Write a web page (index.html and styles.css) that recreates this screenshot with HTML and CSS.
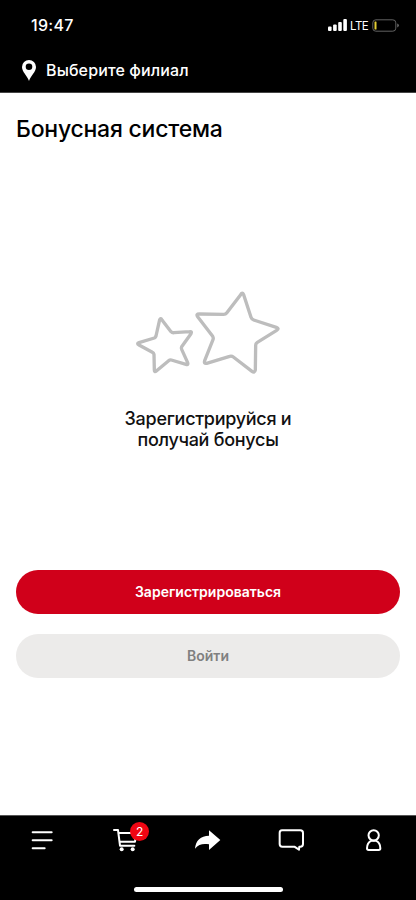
FILE: index.html
```html
<!DOCTYPE html>
<html lang="ru">
<head>
<meta charset="utf-8">
<meta name="viewport" content="width=device-width, initial-scale=1">
<title>Бонусная система</title>
<link rel="stylesheet" href="styles.css">
</head>
<body>
<div class="app">
  <header class="header">
    <div class="status">
      <span class="time">19:47</span>
      <div class="indicators">
        <svg class="signal" viewBox="0 0 19 12"><rect x="0" y="7.6" width="3.6" height="4.4" rx="1"/><rect x="5.1" y="5.4" width="3.6" height="6.6" rx="1"/><rect x="10.2" y="3" width="3.6" height="9" rx="1"/><rect x="15.3" y="0" width="3.6" height="12" rx="1"/></svg>
        <span class="network">LTE</span>
        <svg class="battery" viewBox="0 0 28 13"><rect x=".8" y=".8" width="23" height="11.4" rx="3" fill="none" stroke="#626262"/><rect x="2.5" y="2.5" width="2" height="8" rx=".6" fill="#e3cd35"/><path d="M25.3 4.6q1.5.6 1.5 1.9t-1.5 1.9z" fill="#777"/></svg>
      </div>
    </div>
    <div class="branch">
      <svg class="pin" viewBox="0 0 14 21"><path fill-rule="evenodd" d="M7 0a7 7 0 0 0-7 7c0 5 5.2 8.500 7 14 1.800-5.500 7-9 7-14a7 7 0 0 0-7-7zm0 3.500a3.300 3.300 0 1 1 0 6.600 3.300 3.300 0 0 1 0-6.600z"/></svg>
      <span class="branch-name">Выберите филиал</span>
    </div>
  </header>
  <main class="main">
    <h1 class="title">Бонусная система</h1>
    <section class="empty">
      <svg class="stars" viewBox="0 0 540 330"><path d="M362 44Q367 35 371 44L393 112Q395 118 401 120L469 142Q479 146 470 151L412 187Q407 190 407 196L406 270Q404 280 396 274L340 231Q335 227 329 229L260 250Q251 252 254 242L279 179Q281 174 278 169L233 110Q227 102 238 102L311 103Q317 103 320 99Z"/><path d="M119 119Q122 113 126 120L153 155Q157 159 162 158L209 155Q217 154 213 161L185 200Q183 204 185 208L203 248Q206 256 198 253L154 240Q150 239 146 242L109 273Q103 278 103 270L102 223Q101 219 97 217L57 195Q49 191 57 188L103 174Q107 172 108 168Z"/></svg>
      <p class="message">Зарегистрируйся и<br>получай бонусы</p>
    </section>
    <div class="actions">
      <button class="button primary">Зарегистрироваться</button>
      <button class="button secondary">Войти</button>
    </div>
  </main>
  <footer class="footer">
    <nav class="nav">
      <a class="item"><svg class="icon" viewBox="0 0 108 108"><path d="M26 31H83M26 55H83M26 79H62"/></svg></a>
      <a class="item"><svg class="icon" viewBox="0 0 108 108"><path d="M21 24H33L39 71H82M34 33H88L84 59H38"/><g class="solid"><circle cx="44" cy="82" r="6"/><circle cx="77" cy="82" r="6"/></g></svg><span class="badge">2</span></a>
      <a class="item"><svg class="icon solid" viewBox="0 0 108 108"><path d="M15 80C17 56 32 41 57 41V25L91 54L57 84V67C38 64 26 67 15 80Z"/></svg></a>
      <a class="item"><svg class="icon" viewBox="0 0 108 108"><path d="M27 25H82Q90 25 90 33V66Q90 74 82 74H79L78 83L64 74H28Q20 74 20 66V33Q20 25 27 25Z"/></svg></a>
      <a class="item"><svg class="icon" viewBox="0 0 108 108"><circle cx="53" cy="40" r="15.500"/><path d="M47 56C37 60 33 70 33 79Q33 84 38 84H68Q73 84 73 79C73 70 69 60 59 56Z"/></svg></a>
    </nav>
    <div class="home"></div>
  </footer>
</div>
</body>
</html>
```
FILE: styles.css
```css
* { box-sizing: border-box; }
body { margin: 0; font-family: Inter, "Liberation Sans", sans-serif; color: #111; background: #fff; }
svg { display: block; flex: none; }
.app { height: 900px; display: flex; flex-direction: column; }
.header { height: 93px; background: #000; color: #fff; border-bottom: 1px solid #444; }
.status { height: 51px; display: flex; justify-content: space-between; padding: 0 16px 0 31px; }
.time { font-size: 16px; line-height: 20px; font-weight: 500; padding-top: 15px; letter-spacing: .3px; }
.indicators { display: flex; align-items: center; height: 12px; margin-top: 19px; }
.signal { width: 19px; height: 12px; fill: #fff; }
.network { font-size: 11.5px; line-height: 14px; margin: 1px 4px 0 3px; width: 18px; letter-spacing: -.5px; }
.battery { width: 28px; height: 13px; }
.branch { display: flex; padding-left: 22px; height: 40px; align-items: center; }
.pin { width: 14px; height: 21px; fill: #fff; margin: 0 10px 1px 0; }
.branch-name { font-size: 16px; line-height: 20px; font-weight: 500; white-space: nowrap; letter-spacing: .13px; margin-bottom: 2px; }
.main { flex: 1; padding: 22px 16px 0; }
.title { margin: 0; font-size: 23px; line-height: 28px; font-weight: 500; white-space: nowrap; letter-spacing: -.23px; color: #000; }
.empty { height: 426.5px; padding-top: 137px; display: flex; flex-direction: column; align-items: center; }
.stars { width: 180px; height: 110px; margin-left: 4px; }
.stars path { fill: none; stroke: #bdbdbd; stroke-width: 10; stroke-linejoin: round; }
.message { margin: 18px 0 0; text-align: center; font-size: 18px; line-height: 21px; font-weight: 500; white-space: nowrap; letter-spacing: -.28px; }
.actions { display: flex; flex-direction: column; gap: 20px; }
.button { height: 44px; border: 0; border-radius: 22px; font: 600 14px/20px Inter, sans-serif; padding: 0; }
.primary { background: #d0001a; color: #fff; }
.secondary { background: #ecebea; color: #808080; }
.footer { height: 85px; background: #000; border-top: 1px solid #555; }
.nav { display: grid; grid-template-columns: repeat(5, 1fr); padding-top: 6px; }
.item { position: relative; display: flex; justify-content: center; }
.icon { width: 36px; height: 36px; fill: none; stroke: #fff; stroke-width: 6; stroke-linecap: round; stroke-linejoin: round; }
.icon.solid, .solid { fill: #fff; stroke: none; }
.badge { position: absolute; left: 47px; top: 0; width: 19px; height: 19px; border-radius: 50%; background: #f00613; color: #fff; font-size: 12px; line-height: 19px; text-align: center; }
.home { width: 149px; height: 5px; border-radius: 3px; background: #fff; margin: 29px auto 0; }
```
